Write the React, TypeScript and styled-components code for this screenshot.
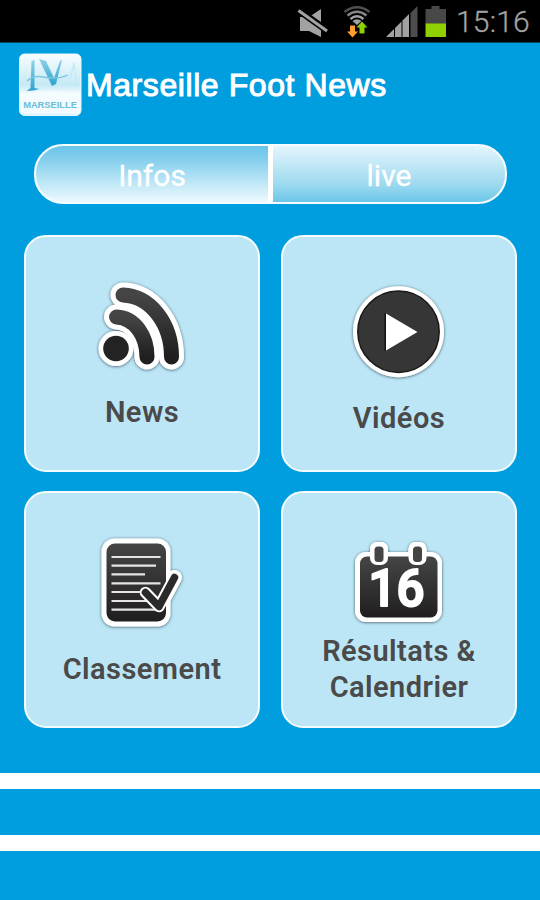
import React from "react";
import styled, { createGlobalStyle } from "styled-components";

const GlobalStyle = createGlobalStyle`
  *, *::before, *::after { box-sizing: border-box; }
  html, body { margin: 0; background: #009ddf; }
`;

const Screen = styled.main`
  width: 540px;
  height: 900px;
  overflow: hidden;
  display: flex;
  flex-direction: column;
  background: #009ddf;
  font-family: Roboto, "Liberation Sans", sans-serif;
`;

const StatusBar = styled.div`
  flex: none;
  height: 43px;
  display: flex;
  justify-content: flex-end;
  background: #000;
  border-bottom: 1px solid #07455f;
`;

const StatusIcons = styled.svg`
  width: 156px;
  height: 42px;
`;

const Clock = styled.time`
  width: 88px;
  padding-left: 4px;
  font-size: 30px;
  line-height: 43px;
  font-weight: 300;
  letter-spacing: 0.2px;
  color: #a3a3a3;
  -webkit-text-stroke: 0.3px #a3a3a3;
`;

const Header = styled.header`
  flex: none;
  height: 101px;
  display: flex;
  align-items: flex-start;
  padding: 10px 0 0 18px;
`;

const Logo = styled.svg`
  width: 64px;
  height: 64px;
  overflow: visible;
`;

const Title = styled.h1`
  margin: 12px 0 0 4px;
  font: 400 32px/40px "Liberation Sans", Arial, sans-serif;
  letter-spacing: 0.58px;
  color: #fff;
  -webkit-text-stroke: 1px #fff;
  white-space: nowrap;
`;

const Tabs = styled.nav`
  flex: none;
  width: 473px;
  height: 60px;
  margin-left: 34px;
  display: grid;
  grid-template-columns: 232px 232px;
  column-gap: 5px;
  border: 2px solid #f4fcff;
  border-radius: 29px;
  overflow: hidden;
  background: #fff;
`;

const Tab = styled.button<{ $active?: boolean }>`
  border: 0;
  padding: 2px 0 0;
  font: 400 30px/56px Roboto, sans-serif;
  color: #fff;
  -webkit-text-stroke: 0.3px #fff;
  background: ${(p) =>
    p.$active
      ? "linear-gradient(#6ac4e9 0%, #83ceed 22%, #bce6f6 62%, #f2fbff 100%)"
      : "linear-gradient(#e4f5fd 0%, #c2e8f6 32%, #9fdaf0 65%, #66c5e8 100%)"};
`;

const Grid = styled.section`
  flex: none;
  display: grid;
  grid-template-columns: 236px 236px;
  grid-auto-rows: 237px;
  gap: 19px 21px;
  margin: 31px 0 0 24px;
`;

const Card = styled.button<{ $top: number }>`
  display: flex;
  flex-direction: column;
  align-items: center;
  justify-content: flex-start;
  padding: ${(p) => p.$top}px 0 0;
  border: 2px solid #f4fcff;
  border-radius: 22px;
  background: #bce6f6;
  font-family: inherit;
`;

const Icon = styled.svg`
  flex: none;
  width: 100px;
  height: 100px;
`;

const Label = styled.span<{ $gap?: number }>`
  margin-top: ${(p) => p.$gap ?? 18}px;
  font-size: 29px;
  line-height: 36px;
  font-weight: 600;
  letter-spacing: 0.45px;
  color: #4a4a4a;
  white-space: pre-line;
  text-align: center;
`;

const Footer = styled.footer`
  flex: none;
  margin-top: 45px;
  height: 78px;
  border: solid #fff;
  border-width: 16px 0;
`;

const DarkGradient = ({ id }: { id: string }) => (
  <defs>
    <linearGradient id={id} x1="0" y1="0" x2="0" y2="1">
      <stop offset="0" stopColor="#464546" />
      <stop offset="1" stopColor="#201e1f" />
    </linearGradient>
    <filter id={`${id}-shadow`} x="-20%" y="-20%" width="140%" height="140%">
      <feDropShadow dx="0" dy="0.500" stdDeviation="1.500" floodColor="#22323a" floodOpacity="0.8" />
    </filter>
  </defs>
);

const NewsIcon = () => (
  <Icon viewBox="92 276 100 100">
    <DarkGradient id="news" />
    <g fill="none" strokeLinecap="round" stroke="#fff" strokeWidth="25" filter="url(#news-shadow)">
      <path d="M123 295C150 296 171.500 323 171.500 357" />
      <path d="M116.500 317C135 318 147 336 147 357" />
      <circle cx="116" cy="348.500" r="17.500" fill="#fff" stroke="none" />
    </g>
    <path d="M123 295C150 296 171.500 323 171.500 357" fill="none" stroke="url(#news)" strokeWidth="15" strokeLinecap="round" />
    <path d="M116.500 317C135 318 147 336 147 357" fill="none" stroke="url(#news)" strokeWidth="15" strokeLinecap="round" />
    <circle cx="116" cy="348.500" r="12.800" fill="#242324" />
  </Icon>
);

const VideoIcon = () => (
  <Icon viewBox="349 282 100 100">
    <DarkGradient id="video" />
    <circle cx="398.500" cy="331.700" r="45.500" fill="#fff" filter="url(#video-shadow)" />
    <circle cx="398.500" cy="331.700" r="40.700" fill="#363636" stroke="#191919" strokeWidth="1.500" />
    <path d="M384.500 313v38l2-1v-36z" fill="#111" />
    <path d="M386 313.500v37L417.500 332z" fill="#fff" />
  </Icon>
);

const RankingIcon = () => (
  <Icon viewBox="92 532 100 100">
    <DarkGradient id="rank" />
    <g filter="url(#rank-shadow)">
      <rect x="101.500" y="538.500" width="69" height="88" rx="13" fill="#fff" />
      <path d="M145.500 592.500L159 606.500L174.500 577.500" fill="none" stroke="#fff" strokeWidth="15" strokeLinecap="round" strokeLinejoin="round" />
    </g>
    <rect x="106.500" y="543.500" width="59.500" height="78" rx="8.500" fill="url(#rank)" />
    <path d="M111.500 557H160.500M111.500 565.700H156M111.500 574.300H145M111.500 583.300H160.500M111.500 592H146M111.500 601H153M111.500 609.700H159" stroke="#e5e5e5" strokeWidth="2.200" />
    <path d="M145.500 592.500L159 606.500L174.500 577.500" fill="none" stroke="#fff" strokeWidth="11.500" strokeLinecap="round" strokeLinejoin="round" />
    <path d="M145.500 592.500L159 606.500L174.500 577.500" fill="none" stroke="#2b2a2b" strokeWidth="7.500" strokeLinecap="round" strokeLinejoin="round" />
  </Icon>
);

const CalendarIcon = () => (
  <Icon viewBox="349 532 100 100">
    <DarkGradient id="cal" />
    <g fill="#fff" filter="url(#cal-shadow)">
      <rect x="355" y="552" width="87" height="70" rx="11" />
      <rect x="370" y="542" width="18" height="23" rx="7" />
      <rect x="408.500" y="542" width="18" height="23" rx="7" />
    </g>
    <rect x="360" y="556.500" width="77.500" height="61" rx="7" fill="url(#cal)" />
    <rect x="370" y="542" width="18" height="23" rx="7" fill="#fff" />
    <rect x="408.500" y="542" width="18" height="23" rx="7" fill="#fff" />
    <rect x="374.500" y="546.500" width="9" height="15.500" rx="3.500" fill="#444" />
    <rect x="413" y="546.500" width="9" height="15.500" rx="3.500" fill="#444" />
    <text x="396.500" y="605.500" textAnchor="middle" textLength="56" lengthAdjust="spacingAndGlyphs" fontFamily="Roboto, sans-serif" fontSize="52" fontWeight="500" fill="#fff" stroke="#fff" strokeWidth="2.200" strokeLinejoin="round">16</text>
  </Icon>
);

const entries = [
  { label: "News", icon: <NewsIcon />, top: 39, gap: 18 },
  { label: "Vidéos", icon: <VideoIcon />, top: 45, gap: 17.5 },
  { label: "Classement", icon: <RankingIcon />, top: 39, gap: 19 },
  { label: "Résultats &\nCalendrier", icon: <CalendarIcon />, top: 39, gap: 1 },
];

export default function App() {
  return (
    <>
      <GlobalStyle />
      <Screen>
        <StatusBar>
          <StatusIcons viewBox="296 0 156 42">
            <path d="M300 17h9l12-8v28l-12-6h-9z" fill="#a2a2a2" />
            <path d="M297 9l32 23" stroke="#000" strokeWidth="7" />
            <path d="M298.500 10.500l28.500 20.500" stroke="#a2a2a2" strokeWidth="3.200" />
            <g fill="none" strokeWidth="2.600">
              <path d="M344.500 12Q357 2.500 369.500 12" stroke="#505050" />
              <path d="M347.500 15.500Q357 8 366.500 15.500" stroke="#858585" />
              <path d="M350.500 19Q357 13.500 363.500 19" stroke="#a2a2a2" />
            </g>
            <path d="M352.500 21Q357 17.500 361.500 21L357 25z" fill="#a2a2a2" />
            <path d="M350 25.500h5v6h3l-5.500 6-5.500-6h3z" fill="#ff9c32" />
            <path d="M359.500 33.500v-6h-3l5.500-6 5.500 6h-3v6z" fill="#8ed000" />
            <path d="M386 37L394 29V37zM395 28L401.500 21.500V37H395zM402.500 20.500L409 14V37H402.500z" fill="#a2a2a2" />
            <path d="M410.500 13L417.500 6V37H410.500z" fill="#4d4d4d" />
            <path d="M425.500 9h6V6h8v3h6.500v15h-20.500z" fill="#484848" />
            <path d="M425.500 23.500H446V37H425.500z" fill="#8ed000" />
          </StatusIcons>
          <Clock>15:16</Clock>
        </StatusBar>
        <Header>
          <Logo viewBox="18 53 64 64">
            <defs>
              <linearGradient id="logo-bg" x1="0" y1="0" x2="0" y2="1">
                <stop offset="0" stopColor="#f8fdff" />
                <stop offset=".5" stopColor="#c5e9f5" />
                <stop offset=".65" stopColor="#f4fbfe" />
                <stop offset="1" stopColor="#d9f0fa" />
              </linearGradient>
              <linearGradient id="logo-ink" x1="0" y1="0" x2="0" y2="1">
                <stop offset="0" stopColor="#8fd2e8" />
                <stop offset="1" stopColor="#2ba4cc" />
              </linearGradient>
            </defs>
            <rect x="19.500" y="54" width="61.500" height="61.500" rx="5" fill="url(#logo-bg)" stroke="#e9f8ff" />
            <path d="M21 96Q43 88 80 93V114H21z" fill="#f5fbfe" opacity=".85" />
            <path d="M31.500 61l3-1v28l5 1q-6 2-13 2l4-3z" fill="url(#logo-ink)" />
            <path d="M39 59l7 2 8 17 6-17 2-1-6 24-4 2z" fill="url(#logo-ink)" />
            <path d="M27 81Q34 75 43 77Q57 80 68 75" fill="none" stroke="#7cc7e1" strokeWidth="1.300" />
            <path d="M70 79L74 63L77 86" fill="none" stroke="#c3e7f4" strokeWidth="1.200" />
            <text x="50" y="108" textAnchor="middle" fontFamily="Liberation Sans, Arial, sans-serif" fontSize="9.300" fontWeight="700" fill="#6cbdd9">MARSEILLE</text>
          </Logo>
          <Title>Marseille Foot News</Title>
        </Header>
        <Tabs>
          <Tab $active>Infos</Tab>
          <Tab>live</Tab>
        </Tabs>
        <Grid>
          {entries.map((entry) => (
            <Card key={entry.label} $top={entry.top}>
              {entry.icon}
              <Label $gap={entry.gap}>{entry.label}</Label>
            </Card>
          ))}
        </Grid>
        <Footer />
      </Screen>
    </>
  );
}
